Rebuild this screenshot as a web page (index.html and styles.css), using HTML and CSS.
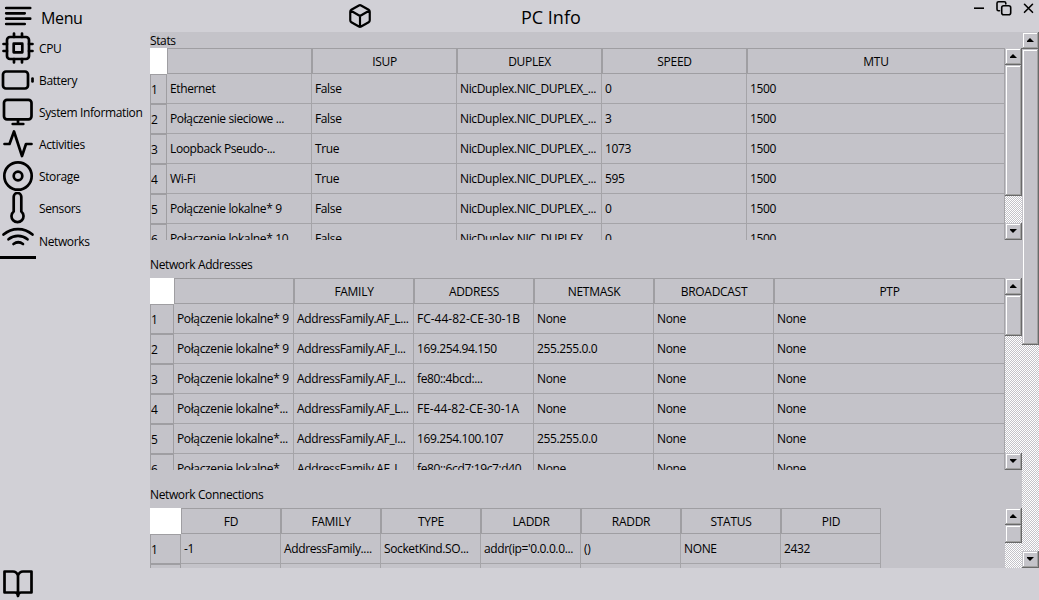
FILE: index.html
```html
<!DOCTYPE html>
<html lang="en">
<head>
<meta charset="utf-8">
<title>PC Info</title>
<link rel="stylesheet" href="styles.css">
</head>
<body>
<div class="app">
  <aside class="sidebar">
    <div class="menu">
      <svg class="icon" viewBox="0 0 36 32"><path d="M6.200 8h24M6.200 13.300h18.500M6.200 18.700h24M6.200 24h18.500"/></svg>
      <span>Menu</span>
    </div>
    <div class="item"><svg class="icon" viewBox="0 0 36 32"><rect x="7" y="5" width="22" height="22" rx="3"/><rect x="13.700" y="11.700" width="8.600" height="8.600"/><path d="M14 1.500V5M22 1.500V5M14 27v3.500M22 27v3.500M3.500 12H7M3.500 19H7M29 12h3.500M29 19h3.500"/></svg><span>CPU</span></div>
    <div class="item"><svg class="icon" viewBox="0 0 36 32"><rect x="3" y="7.500" width="25" height="17" rx="3"/><path d="M32.500 14.500v3"/></svg><span>Battery</span></div>
    <div class="item"><svg class="icon" viewBox="0 0 36 32"><rect x="4" y="3.800" width="27.500" height="19.500" rx="3"/><path d="M18 23.500V28M12.700 28h10.600"/></svg><span>System Information</span></div>
    <div class="item"><svg class="icon" viewBox="0 0 36 32"><path d="M4.500 16h5L14 3.500 22 28l4-12h5.500"/></svg><span>Activities</span></div>
    <div class="item"><svg class="icon" viewBox="0 0 36 32"><circle cx="18" cy="16" r="13.700"/><circle cx="18" cy="16" r="4.300"/></svg><span>Storage</span></div>
    <div class="item"><svg class="icon" viewBox="0 0 36 32"><path d="M13.700 19.500V4.800a3.800 3.800 0 0 1 7.600 0v14.700a6 6 0 1 1-7.600 0z"/></svg><span>Sensors</span></div>
    <div class="item active"><svg class="icon" viewBox="0 0 36 32"><path d="M3.500 10.500a22 22 0 0 1 29 0M8.500 15.300a15 15 0 0 1 19 0M13.500 20a8 8 0 0 1 9.500 0"/></svg><span>Networks</span></div>
    <svg class="icon book" viewBox="0 0 36 32"><path d="M18 28V7.500Q16.500 3.500 13 3.500H4.500V24.500H15Q17.500 24.500 18 28Q18.500 24.500 21 24.500H31.500V3.500H23Q19.500 3.500 18 7.500"/></svg>
  </aside>
  <div class="main">
    <header class="titlebar">
      <svg class="cube" viewBox="0 0 24 24"><path d="M21 16V8a2 2 0 0 0-1-1.730l-7-4a2 2 0 0 0-2 0l-7 4A2 2 0 0 0 3 8v8a2 2 0 0 0 1 1.730l7 4a2 2 0 0 0 2 0l7-4A2 2 0 0 0 21 16zM3.270 6.960 12 12.010l8.730-5.050M12 22.080V12"/></svg>
      <h1>PC Info</h1>
      <svg class="window-controls" viewBox="0 0 70 18"><path d="M5 8.200h10" class="minimize"/><rect x="32.700" y="5.800" width="9" height="9" rx="2"/><path d="M30.500 10.800h-1q-1.500 0-1.500-1.500V3.200q0-1.500 1.500-1.500h5.800q1.500 0 1.500 1.500v.8"/><path d="m55.500 4.300 8 8m0-8-8 8"/></svg>
    </header>
    <div class="viewport">
      <div class="sections">
        <section>
          <h2>Stats</h2>
          <div class="panel">
            <table class="stats">
              <colgroup><col class="n17"><col class="c145"><col class="c145"><col class="c145"><col class="c145"><col class="c258"></colgroup>
              <tr><td class="corner"></td><th></th><th>ISUP</th><th>DUPLEX</th><th>SPEED</th><th>MTU</th></tr>
              <tr><td class="num">1</td><td>Ethernet</td><td>False</td><td>NicDuplex.NIC_DUPLEX_...</td><td>0</td><td>1500</td></tr>
              <tr><td class="num">2</td><td>Połączenie sieciowe ...</td><td>False</td><td>NicDuplex.NIC_DUPLEX_...</td><td>3</td><td>1500</td></tr>
              <tr><td class="num">3</td><td>Loopback Pseudo-...</td><td>True</td><td>NicDuplex.NIC_DUPLEX_...</td><td>1073</td><td>1500</td></tr>
              <tr><td class="num">4</td><td>Wi-Fi</td><td>True</td><td>NicDuplex.NIC_DUPLEX_...</td><td>595</td><td>1500</td></tr>
              <tr><td class="num">5</td><td>Połączenie lokalne* 9</td><td>False</td><td>NicDuplex.NIC_DUPLEX_...</td><td>0</td><td>1500</td></tr>
              <tr><td class="num">6</td><td>Połączenie lokalne* 10</td><td>False</td><td>NicDuplex.NIC_DUPLEX_...</td><td>0</td><td>1500</td></tr>
            </table>
            <div class="scrollbar"><i class="btn up"></i><i class="thumb t131"></i><i class="track"></i><i class="btn down"></i></div>
          </div>
        </section>
        <section>
          <h2>Network Addresses</h2>
          <div class="panel">
            <table class="addresses">
              <colgroup><col class="n24"><col class="c120"><col class="c120"><col class="c120"><col class="c120"><col class="c120"><col class="c231"></colgroup>
              <tr><td class="corner"></td><th></th><th>FAMILY</th><th>ADDRESS</th><th>NETMASK</th><th>BROADCAST</th><th>PTP</th></tr>
              <tr><td class="num">1</td><td>Połączenie lokalne* 9</td><td>AddressFamily.AF_L...</td><td class="mac">FC-44-82-CE-30-1B</td><td>None</td><td>None</td><td>None</td></tr>
              <tr><td class="num">2</td><td>Połączenie lokalne* 9</td><td>AddressFamily.AF_I...</td><td>169.254.94.150</td><td>255.255.0.0</td><td>None</td><td>None</td></tr>
              <tr><td class="num">3</td><td>Połączenie lokalne* 9</td><td>AddressFamily.AF_I...</td><td>fe80::4bcd:...</td><td>None</td><td>None</td><td>None</td></tr>
              <tr><td class="num">4</td><td>Połączenie lokalne*...</td><td>AddressFamily.AF_L...</td><td class="mac">FE-44-82-CE-30-1A</td><td>None</td><td>None</td><td>None</td></tr>
              <tr><td class="num">5</td><td>Połączenie lokalne*...</td><td>AddressFamily.AF_I...</td><td>169.254.100.107</td><td>255.255.0.0</td><td>None</td><td>None</td></tr>
              <tr><td class="num">6</td><td>Połączenie lokalne*</td><td>AddressFamily.AF_I...</td><td>fe80::6cd7:19c7:d40</td><td>None</td><td>None</td><td>None</td></tr>
            </table>
            <div class="scrollbar"><i class="btn up"></i><i class="thumb t41"></i><i class="track"></i><i class="btn down"></i></div>
          </div>
        </section>
        <section>
          <h2>Network Connections</h2>
          <div class="panel">
            <table class="connections">
              <colgroup><col class="n31"><col class="c100"><col class="c100"><col class="c100"><col class="c100"><col class="c100"><col class="c100"><col class="c100"></colgroup>
              <tr><td class="corner"></td><th>FD</th><th>FAMILY</th><th>TYPE</th><th>LADDR</th><th>RADDR</th><th>STATUS</th><th>PID</th></tr>
              <tr><td class="num">1</td><td>-1</td><td>AddressFamily....</td><td>SocketKind.SO...</td><td>addr(ip='0.0.0.0...</td><td>()</td><td>NONE</td><td>2432</td></tr>
              <tr><td class="num"></td><td></td><td></td><td></td><td></td><td></td><td></td><td></td></tr>
            </table>
            <div class="scrollbar"><i class="btn up"></i><i class="thumb t18"></i><i class="track"></i><i class="btn down"></i></div>
          </div>
        </section>
      </div>
      <div class="scrollbar outer"><i class="btn up"></i><i class="thumb t296"></i><i class="track"></i><i class="btn down"></i></div>
    </div>
  </div>
</div>
</body>
</html>
```

FILE: styles.css
```css
* { box-sizing: border-box; }
body {
  margin: 0;
  background: #d1d0d6;
  color: #000;
  font: 12px/16px "Open Sans", "Noto Sans", sans-serif;
  letter-spacing: -0.37px;
}
.app { display: flex; width: 1039px; height: 600px; overflow: hidden; }
svg { fill: none; stroke: #000; stroke-linecap: round; stroke-linejoin: round; display: block; }

/* Sidebar */
.sidebar { width: 150px; display: flex; flex-direction: column; }
.icon { width: 36px; height: 32px; flex: none; stroke-width: 2.7; }
.menu, .item { display: flex; align-items: center; height: 32px; white-space: nowrap; }
.menu { font-size: 16px; gap: 5px; padding-top: 3px; }
.item { gap: 3px; padding-top: 1px; }
.menu .icon { margin-top: -3px; }
.item .icon { margin-top: -1px; }
.item.active { height: 35px; }
.active .icon { height: 35px; border-bottom: 3px solid #000; }
.book { margin-top: auto; }

/* Title bar */
.main { flex: 1; display: flex; flex-direction: column; }
.titlebar { display: flex; height: 32px; align-items: flex-start; }
.cube { width: 26px; height: 26px; margin: 3px 0 0 197px; stroke-width: 2; }
h1 { margin: 5px 0 0 148px; width: 70px; font-size: 18px; line-height: 25px; font-weight: 400; letter-spacing: 0; }
.window-controls { width: 70px; height: 18px; margin-left: auto; stroke-width: 1.6; }
.minimize { stroke-linecap: butt; }

/* Scrolling content */
.viewport { display: flex; height: 536px; background: #c4c3c9; overflow: hidden; }
.sections { width: 872px; }
section { height: 230px; }
section:first-child { height: 224px; }
h2 { margin: 0; height: 16px; padding-top: 1px; font-size: 12px; line-height: 16px; font-weight: 400; }
section + section h2 { height: 22px; }
.panel { display: flex; justify-content: space-between; height: 192px; overflow: hidden; }

/* Tables */
table { table-layout: fixed; border-collapse: separate; border-spacing: 0; flex: none; height: max-content; }
.stats, .addresses { width: 855px; }
.connections { width: 731px; }
th, td { padding: 0; font-weight: 400; white-space: nowrap; overflow: hidden; }
th { height: 26px; padding-top: 2px; border: 1px solid #9f9ea2; text-align: center; letter-spacing: -0.3px; }
td { height: 30px; padding-left: 3px; border: solid #a5a4a8; border-width: 0 1px 1px 0; }
td.corner { height: 26px; padding: 0; background: #fff; border: 0; }
td.num { padding: 2px 0 0; border: 1px solid #9f9ea2; }
td.mac { letter-spacing: 0; }
.n17 { width: 17px; }
.n24 { width: 24px; }
.n31 { width: 31px; }
.c100 { width: 100px; }
.c120 { width: 120px; }
.c145 { width: 145px; }
.c231 { width: 231px; }
.c258 { width: 258px; }

/* Scrollbars */
.scrollbar { display: flex; flex-direction: column; width: 17px; flex: none; }
.btn, .thumb {
  flex: none;
  background: #c4c3c9;
  box-shadow: inset -1px -1px #696969, inset 1px 1px #c4c3c9, inset -2px -2px #a0a0a0, inset 2px 2px #fff;
}
.btn { height: 17px; display: flex; align-items: center; justify-content: center; }
.btn::before { content: ""; width: 7px; height: 4px; background: #000; margin: -1px 1px 0 0; }
.up::before { clip-path: polygon(3px 0, 4px 0, 4px 1px, 5px 1px, 5px 2px, 6px 2px, 6px 3px, 7px 3px, 7px 4px, 0 4px, 0 3px, 1px 3px, 1px 2px, 2px 2px, 2px 1px, 3px 1px); }
.down::before { clip-path: polygon(0 0, 7px 0, 7px 1px, 6px 1px, 6px 2px, 5px 2px, 5px 3px, 4px 3px, 4px 4px, 3px 4px, 3px 3px, 2px 3px, 2px 2px, 1px 2px, 1px 1px, 0 1px); }
.track { flex: 1; background: repeating-conic-gradient(#fff 0 25%, #c4c3c9 0 50%) 0 0 / 2px 2px; }
.t18 { height: 18px; }
.t41 { height: 41px; }
.t131 { height: 131px; }
.t296 { height: 296px; }
```
